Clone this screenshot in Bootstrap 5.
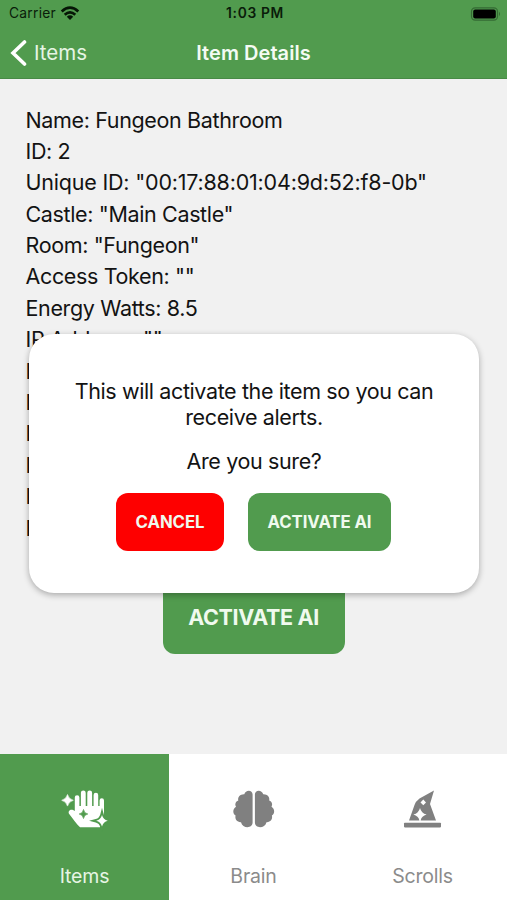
<!DOCTYPE html>
<html lang="en">
<head>
<meta charset="utf-8">
<meta name="viewport" content="width=device-width, initial-scale=1">
<title>Item Details</title>
<link href="https://cdn.jsdelivr.net/npm/bootstrap@5.3.0/dist/css/bootstrap.min.css" rel="stylesheet">
<style>
  :root { --leaf: #519b4e; }
  body { font-family: Inter, "Liberation Sans", sans-serif; background: #f1f1f1; color: #131313; height: 900px; overflow: hidden; }
  svg { display: block; flex: none; }
  .bg-leaf { background: var(--leaf); }
  .top-area { height: 79px; border-bottom: 1px solid #488a46; }
  .status { height: 27px; padding: 0 6px 0 9px; color: #0a1c0a; }
  .status > *, .title-bar > * { flex: 1 1 0; }
  .carrier { font-size: 13.8px; letter-spacing: .25px; }
  .clock { font-size: 13.8px; font-weight: 600; letter-spacing: .65px; }
  .title-bar { height: 51px; padding: 0 10px; color: #f4fbf3; }
  .back { font-size: 20.5px; color: #e6f5e4; }
  .back span { padding: 1px 0 0 7px; }
  .heading { font-size: 20px; font-weight: 600; letter-spacing: .05px; }
  .details { padding: 25.500px 26px 0 25.500px; }
  .details li { font-size: 21.5px; height: 31.4px; line-height: 31.4px; letter-spacing: -.36px; white-space: nowrap; }
  .details li.wide { letter-spacing: -.2px; }
  .pill { border: 0; border-radius: 12px; color: #f0faee; font-weight: 600; display: flex; align-items: center; justify-content: center; padding: 2px 0 0; }
  .pill:hover { color: #fff; }
  .pill-page { width: 182px; height: 75px; font-size: 21.5px; font-weight: 700; letter-spacing: -.35px; margin-top: 35.500px; padding-top: 0; }
  .pill-cancel { width: 108px; height: 58px; font-size: 16.8px; font-weight: 700; letter-spacing: -.1px; background: #fe0000; }
  .pill-ok { width: 143px; height: 58px; font-size: 16.8px; font-weight: 700; letter-spacing: -.1px; }
  .dialog-box { left: 29px; top: 334px; width: 450px; height: 259px; border-radius: 25px; background: #fff; box-shadow: 0 2px 6px rgba(0,0,0,.3); padding-top: 44px; }
  .dialog-box p { font-size: 21.5px; line-height: 26px; letter-spacing: -.38px; }
  .dialog-box .ask { margin-top: 18px; }
  .actions { margin: 18.500px 1px 0 0; }
  .tabs { height: 146px; background: #fff; }
  .tab { color: #8b8b8b; font-size: 19.5px; letter-spacing: -.2px; padding-top: 32px; line-height: 24px; }
  .tab.on { background: var(--leaf); color: #e6f5e4; }
  .tab span { margin-top: 32px; }
</style>
</head>
<body class="d-flex flex-column m-0 position-relative">
<header class="top-area bg-leaf flex-shrink-0">
  <div class="status d-flex align-items-center">
    <div class="carrier d-flex align-items-center"><span>Carrier</span>
      <svg class="ms-1" width="20" height="15" viewBox="0 0 20 15"><g fill="none" stroke="#061606" stroke-width="2.7"><path d="M1.7 5.4Q10-2 18.3 5.4"/><path d="M4.7 8.7Q10 4 15.3 8.7"/></g><path d="M6.8 10.7Q10 8 13.2 10.7L10 14Z" fill="#061606"/></svg>
    </div>
    <div class="clock text-center"><span>1:03 PM</span></div>
    <div class="d-flex justify-content-end">
      <svg width="31" height="14" viewBox="0 0 31 14"><rect x="1.5" y=".8" width="26" height="12.4" rx="3.6" fill="none" stroke="#356b34" stroke-width="1.2"/><rect x="3.2" y="2.6" width="22.6" height="8.8" rx="2" fill="#000"/><path d="M29 4.8Q31 7 29 9.2Z" fill="#356b34"/></svg>
    </div>
  </div>
  <nav class="title-bar d-flex align-items-center">
    <div class="back d-flex align-items-center"><svg width="17" height="26" viewBox="0 0 17 26"><path d="M14.5 2L3 13L14.5 24" fill="none" stroke="#fff" stroke-width="3.6" stroke-linecap="round"/></svg><span>Items</span></div>
    <div class="heading text-center text-nowrap">Item Details</div>
    <div></div>
  </nav>
</header>
<main class="flex-grow-1 d-flex flex-column">
  <ul class="details list-unstyled mb-0">
    <li>Name: Fungeon Bathroom</li>
    <li>ID: 2</li>
    <li class="wide">Unique ID: "00:17:88:01:04:9d:52:f8-0b"</li>
    <li>Castle: "Main Castle"</li>
    <li>Room: "Fungeon"</li>
    <li>Access Token: ""</li>
    <li>Energy Watts: 8.5</li>
    <li>IP Address: ""</li>
    <li>I</li>
    <li>I</li>
    <li>I</li>
    <li>I</li>
    <li>I</li>
    <li>N</li>
  </ul>
  <button class="btn pill pill-page bg-leaf mx-auto">ACTIVATE AI</button>
</main>
<section class="dialog-box position-absolute text-center" role="dialog">
  <p class="mb-0">This will activate the item so you can<br>receive alerts.</p>
  <p class="ask mb-0">Are you sure?</p>
  <div class="actions d-flex justify-content-center gap-4">
    <button class="btn pill pill-cancel">CANCEL</button>
    <button class="btn pill pill-ok bg-leaf">ACTIVATE AI</button>
  </div>
</section>
<footer class="tabs row g-0 flex-shrink-0">
  <a class="tab on col d-flex flex-column align-items-center text-decoration-none">
    <svg width="48" height="46" viewBox="0 0 48 46"><path d="M13.800 25V11.500a2.200 2.200 0 0 1 4.600 0V20h1.500V6.800a2.400 2.400 0 0 1 4.800 0V20h1.600V6.800a2.400 2.400 0 0 1 4.800 0V20h1.500V9a2.300 2.300 0 0 1 4.600 0V20h1.400v-5.500a2.200 2.200 0 0 1 4.400 0V27c0 3-2 4.500-2.400 7l-4 1.500 3.900 2.500-1.500 3.200H19c-3.500-3-7.500-9-11-13.500-1.400-3 2-5.700 5.800-2.700Z" fill="#fff"/><path d="M22.500 23.500q.6 4 4.300 4.500-3.700.5-4.300 4.500-.6-4-4.300-4.500 3.700-.5 4.300-4.500Z" fill="var(--leaf)" stroke="var(--leaf)" stroke-width=".7"/><path d="M6.500 8.500q1.200 4.600 5.800 5.800-4.600 1.200-5.800 5.800Q5.300 15.500.7 14.300 5.300 13.100 6.500 8.500Z" fill="#fff" stroke="#fff" stroke-width=".6"/><path d="M41 29q1.200 4.600 5.800 5.800Q42.200 36 41 40.600 39.800 36 35.200 34.800 39.800 33.600 41 29Z" fill="#fff" stroke="var(--leaf)" stroke-width="3.600" paint-order="stroke"/></svg>
    <span>Items</span>
  </a>
  <a class="tab col d-flex flex-column align-items-center text-decoration-none">
    <svg width="48" height="46" viewBox="0 0 48 46"><path id="lobe" d="M22.600 8.500C22.600 3.500 15.500 3.300 14.300 8.300 10.500 8 7.500 11 8.300 14.500 5.500 15.500 4.600 18.500 6 20.700 2.500 23 2.500 27.500 5.600 29.600 4.500 33.500 7.500 36.500 11 36.200 12.500 42.800 22.600 42.700 22.600 36.500Z" fill="#808080"/><use href="#lobe" transform="matrix(-1 0 0 1 47.500 0)"/></svg>
    <span>Brain</span>
  </a>
  <a class="tab col d-flex flex-column align-items-center text-decoration-none">
    <svg width="48" height="46" viewBox="0 0 48 46"><path fill="#808080" fill-rule="evenodd" d="M10 34.500 15.500 19Q16.500 15.500 20.500 12.500L35 4.500 31 18 37 34.500ZM24.300 13.500L27 16.500 24.300 19.300 21.500 16.500ZM21 22q1.300 5.300 6.600 6.600Q22.600 30 21.600 34.500H20.400Q19.400 30 14.400 28.600 19.700 27.300 21 22Z"/><rect x="5" y="36.800" width="37" height="4.600" rx=".8" fill="#808080"/></svg>
    <span>Scrolls</span>
  </a>
</footer>
<script src="https://cdn.jsdelivr.net/npm/bootstrap@5.3.0/dist/js/bootstrap.bundle.min.js"></script>
</body>
</html>
